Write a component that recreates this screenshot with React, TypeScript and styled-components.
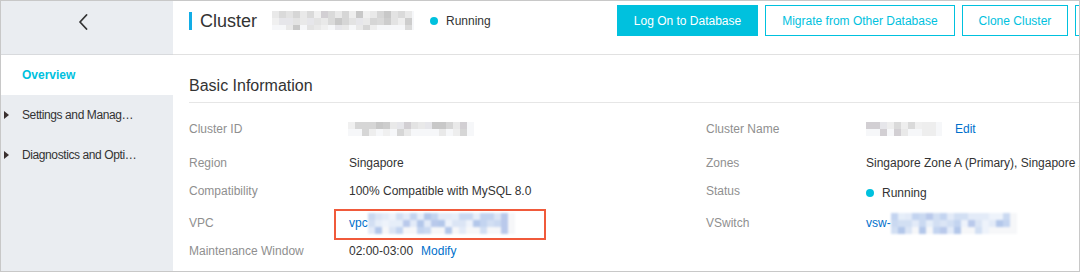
import React from "react";
import styled, { createGlobalStyle } from "styled-components";

const Global = createGlobalStyle`
  html, body { margin: 0; padding: 0; background: #fff; }
  body { font-family: "Liberation Sans", Arial, sans-serif; color: #333; }
  * { box-sizing: border-box; }
`;

const CYAN = "#00c1de";
const LINK = "#0070cc";

const GRAYS = ["#f0f0f0", "#e3e3e3", "#d6d6d6", "#cdcdcd", "#e9e9e9", "#dadada", "#c8c8c8", "#eeeeee", "#d2cfd3", "#e6e6ea"];
const BLUES = ["#e6eef9", "#d2dff3", "#c3d4f0", "#b3c7ea", "#eef3fb", "#dbe5f5", "#cad9f1", "#e3ebf8", "#b9c9eb"];

function mosaic(width: number, height: number, block: number, palette: string[], seed: number, fade = true): string {
  const rows = Math.ceil(height / block);
  const cols = Math.ceil(width / block);
  let s = seed;
  const rnd = () => {
    s = (s * 9301 + 49297) % 233280;
    return s / 233280;
  };
  const layers: string[] = [];
  for (let r = 0; r < rows; r++) {
    const stops: string[] = [];
    for (let c = 0; c < cols; c++) {
      let col = palette[Math.floor(rnd() * palette.length)];
      if (fade && (c === cols - 1 || (r === rows - 1 && rnd() > 0.5))) col = "#f6f7f9";
      stops.push(`${col} ${c * block}px ${(c + 1) * block}px`);
    }
    layers.push(`linear-gradient(90deg, ${stops.join(", ")}) 0 ${r * block}px / 100% ${block}px no-repeat`);
  }
  return layers.join(", ");
}

const Frame = styled.div`
  width: 1080px;
  height: 272px;
  border: 1px solid #c8c8c8;
  overflow: hidden;
  display: grid;
  grid-template-columns: 172px 991px;
  background: #fff;
`;

const Sidebar = styled.aside`
  background: #eaedf1;
  display: flex;
  flex-direction: column;
`;

const SideHeader = styled.div`
  height: 54px;
  border-bottom: 1px solid #d8dadd;
  display: flex;
  align-items: center;
  justify-content: center;
  padding: 0 9px 11px 0;
`;

const NavItem = styled.div<{ $active?: boolean }>`
  height: 40px;
  display: flex;
  align-items: center;
  padding-left: 3px;
  background: ${(p) => (p.$active ? "#fff" : "transparent")};
`;

const Caret = styled.span<{ $hidden?: boolean }>`
  width: 0;
  height: 0;
  border-left: 5px solid ${(p) => (p.$hidden ? "transparent" : "#3a3030")};
  border-top: 4px solid transparent;
  border-bottom: 4px solid transparent;
  margin-right: 13px;
`;

const NavLabel = styled.span<{ $active?: boolean }>`
  font-size: 12px;
  width: 117px;
  white-space: nowrap;
  overflow: hidden;
  text-overflow: ellipsis;
  color: ${(p) => (p.$active ? CYAN : "#333")};
  font-weight: ${(p) => (p.$active ? 700 : 400)};
  letter-spacing: ${(p) => (p.$active ? "0" : "-0.4px")};
`;

const Main = styled.main`
  display: flex;
  flex-direction: column;
`;

const Header = styled.header`
  height: 54px;
  border-bottom: 1px solid #e1e1e1;
  display: flex;
  align-items: flex-start;
  padding: 4px 16px 0 16px;
`;

const TitleGroup = styled.div`
  height: 31px;
  display: flex;
  align-items: center;
`;

const TitleBar = styled.span`
  width: 3px;
  height: 18px;
  background: #12ade6;
  margin-right: 8px;
`;

const Title = styled.h1`
  margin: 0 15px 0 0;
  font-size: 18px;
  font-weight: 400;
  color: #333;
  line-height: 1;
`;

const Mosaic = styled.span<{ $w: number; $h: number; $bg: string; $ml?: number; $soft?: boolean }>`
  display: inline-block;
  flex-shrink: 0;
  width: ${(p) => p.$w}px;
  height: ${(p) => p.$h}px;
  margin-left: ${(p) => p.$ml ?? 0}px;
  background: ${(p) => p.$bg};
  filter: blur(${(p) => (p.$soft ? 0.8 : 0.4)}px);
`;

const Dot = styled.span`
  width: 8px;
  height: 8px;
  border-radius: 50%;
  background: ${CYAN};
  margin-right: 8px;
  flex-shrink: 0;
`;

const StatusText = styled.span`
  font-size: 12px;
  color: #333;
`;

const Status = styled.span<{ $ml?: number; $shift?: number }>`
  display: inline-flex;
  align-items: center;
  margin-left: ${(p) => p.$ml ?? 0}px;
  padding-top: ${(p) => p.$shift ?? 0}px;
`;

const Actions = styled.div`
  margin-left: auto;
  display: flex;
  gap: 7px;
`;

const Button = styled.button<{ $primary?: boolean }>`
  height: 31px;
  padding: 0 16px;
  border: 1px solid ${CYAN};
  background: ${(p) => (p.$primary ? CYAN : "#fff")};
  color: ${(p) => (p.$primary ? "#fff" : CYAN)};
  font-family: "Liberation Sans", Arial, sans-serif;
  font-size: 12px;
  white-space: nowrap;
  flex-shrink: 0;
  cursor: pointer;
`;

const Section = styled.section`
  padding: 23px 0 0 16px;
`;

const SectionTitle = styled.h2`
  margin: 0;
  font-size: 16px;
  font-weight: 400;
  line-height: 16px;
  color: #333;
  padding-bottom: 8px;
  border-bottom: 1px solid #e6e6e6;
`;

const Row = styled.div<{ $mt: number }>`
  display: grid;
  grid-template-columns: 160px 357px 160px 1fr;
  height: 28px;
  align-items: center;
  margin-top: ${(p) => p.$mt}px;
  font-size: 12px;
`;

const Label = styled.span`
  color: #8f8f8f;
`;

const Value = styled.span`
  color: #333;
  white-space: nowrap;
  display: flex;
  align-items: center;
  position: relative;
`;

const Link = styled.a<{ $ml?: number }>`
  color: ${LINK};
  text-decoration: none;
  margin-left: ${(p) => p.$ml ?? 0}px;
`;

const Highlight = styled.span`
  position: absolute;
  left: -15px;
  top: -4px;
  width: 212px;
  height: 31px;
  border: 2px solid #f05a3b;
  pointer-events: none;
`;

const Chevron = () => (
  <svg width="10" height="16" viewBox="0 0 10 16" fill="none">
    <path d="M8.5 1 L2 8 L8.5 15" stroke="#333" strokeWidth="1.8" strokeLinecap="round" strokeLinejoin="round" />
  </svg>
);

const headerBlur = mosaic(142, 19, 7, GRAYS, 7);
const idBlur = mosaic(126, 14, 7, GRAYS, 21);
const nameBlur = mosaic(76, 14, 7, GRAYS, 42);
const vpcBlur = mosaic(147, 21, 7, BLUES, 13);
const vswBlur = mosaic(126, 21, 7, BLUES, 77);

export default function App() {
  return (
    <>
      <Global />
      <Frame>
        <Sidebar>
          <SideHeader>
            <Chevron />
          </SideHeader>
          <NavItem $active>
            <Caret $hidden />
            <NavLabel $active>Overview</NavLabel>
          </NavItem>
          <NavItem>
            <Caret />
            <NavLabel>Settings and Management</NavLabel>
          </NavItem>
          <NavItem>
            <Caret />
            <NavLabel>Diagnostics and Optimization</NavLabel>
          </NavItem>
        </Sidebar>
        <Main>
          <Header>
            <TitleGroup>
              <TitleBar />
              <Title>Cluster</Title>
              <Mosaic $w={142} $h={19} $bg={headerBlur} />
              <Status $ml={16}>
                <Dot />
                <StatusText>Running</StatusText>
              </Status>
            </TitleGroup>
            <Actions>
              <Button $primary>Log On to Database</Button>
              <Button>Migrate from Other Database</Button>
              <Button>Clone Cluster</Button>
              <Button>Restart</Button>
            </Actions>
          </Header>
          <Section>
            <SectionTitle>Basic Information</SectionTitle>
            <Row $mt={12}>
              <Label>Cluster ID</Label>
              <Value>
                <Mosaic $w={126} $h={14} $bg={idBlur} $ml={-1} />
              </Value>
              <Label>Cluster Name</Label>
              <Value>
                <Mosaic $w={76} $h={14} $bg={nameBlur} />
                <Link $ml={13}>Edit</Link>
              </Value>
            </Row>
            <Row $mt={6}>
              <Label>Region</Label>
              <Value>Singapore</Value>
              <Label>Zones</Label>
              <Value>Singapore Zone A (Primary), Singapore Zone B</Value>
            </Row>
            <Row $mt={0}>
              <Label>Compatibility</Label>
              <Value>100% Compatible with MySQL 8.0</Value>
              <Label>Status</Label>
              <Value>
                <Status $shift={4}>
                  <Dot />
                  <StatusText>Running</StatusText>
                </Status>
              </Value>
            </Row>
            <Row $mt={4}>
              <Label>VPC</Label>
              <Value>
                <Highlight />
                <Link>vpc</Link>
                <Mosaic $w={147} $h={21} $bg={vpcBlur} $soft />
              </Value>
              <Label>VSwitch</Label>
              <Value>
                <Link>vsw-</Link>
                <Mosaic $w={126} $h={21} $bg={vswBlur} $soft />
              </Value>
            </Row>
            <Row $mt={0}>
              <Label>Maintenance Window</Label>
              <Value>
                02:00-03:00
                <Link $ml={8}>Modify</Link>
              </Value>
              <Label />
              <Value />
            </Row>
          </Section>
        </Main>
      </Frame>
    </>
  );
}
